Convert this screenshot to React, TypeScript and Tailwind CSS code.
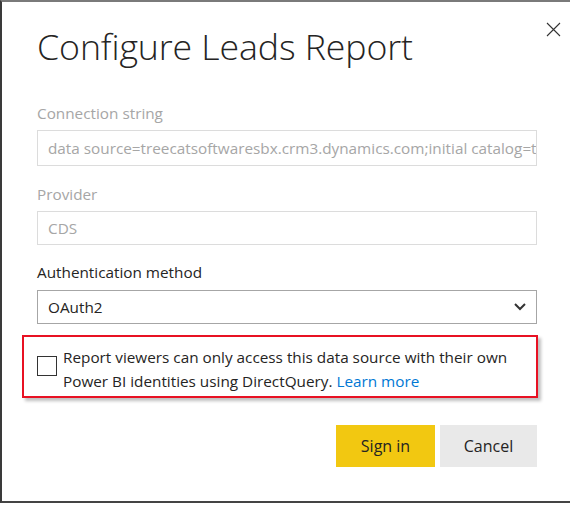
import React from "react";

export default function App() {
  return (
    <div className="w-[570px] h-[506px] bg-white overflow-hidden relative" style={{ fontFamily: '"Open Sans", "Noto Sans", sans-serif' }}>
      <div className="w-[600px] h-[503px] border-t-2 border-t-[#7a7a7a] border-l-2 border-l-[#3a3a3a] border-b-2 border-b-[#444] bg-white relative">
        <button className="absolute left-[541px] top-[17px] w-[20px] h-[20px] flex items-center justify-center">
          <svg width="15" height="15" viewBox="0 0 15 15">
            <path d="M1 1 L14 14 M14 1 L1 14" stroke="#333" strokeWidth="1.1" fill="none" />
          </svg>
        </button>
        <div className="pl-[35px] w-[535px]">
          <h1 className="pt-[22px] text-[35.7px] leading-[44px] font-light text-[#252423] tracking-[-0.1px]">Configure Leads Report</h1>
          <div className="mt-[35px] text-[15.3px] leading-[20px] text-[#a6a6a6]">Connection string</div>
          <div className="mt-[7px] h-[36px] border border-[#dcdcdc] px-[10px] flex items-center text-[15.3px] text-[#a6a6a6] overflow-hidden whitespace-nowrap">
            data source=treecatsoftwaresbx.crm3.dynamics.com;initial catalog=treecat
          </div>
          <div className="mt-[18px] text-[15.3px] leading-[20px] text-[#a6a6a6]">Provider</div>
          <div className="mt-[7px] h-[34px] border border-[#dcdcdc] px-[10px] flex items-center text-[15.3px] text-[#a6a6a6]">CDS</div>
          <div className="mt-[17px] text-[15.3px] leading-[20px] text-[#252423]">Authentication method</div>
          <div className="mt-[8px] h-[34px] border border-[#a6a6a6] pl-[10px] pr-[10px] flex items-center justify-between text-[15.3px] text-[#252423]">
            <span>OAuth2</span>
            <svg width="12" height="8" viewBox="0 0 12 8">
              <path d="M1 1 L6 6 L11 1" stroke="#333" strokeWidth="2" fill="none" />
            </svg>
          </div>
        </div>
        <div className="ml-[20px] w-[516px] mt-[11px] border-2 border-[#e81123] shadow-[3px_3px_3px_rgba(0,0,0,0.25)] pl-[13px] pr-[10px] pt-[8px] pb-[3px] flex items-start gap-[6px]">
          <div className="mt-[11px] w-[20px] h-[20px] border border-[#333] shrink-0 bg-white" />
          <div className="text-[15.3px] leading-[24px] text-[#252423]">
            Report viewers can only access this data source with their own Power BI identities using DirectQuery. <span className="text-[#0078d4]">Learn more</span>
          </div>
        </div>
        <div className="pl-[35px] w-[535px] mt-[27px] flex justify-end gap-[5px]">
          <button className="w-[99px] h-[42px] bg-[#f2c811] text-[16px] text-[#252423]">Sign in</button>
          <button className="w-[97px] h-[42px] bg-[#e9e9e9] text-[16px] text-[#252423]">Cancel</button>
        </div>
      </div>
    </div>
  );
}
